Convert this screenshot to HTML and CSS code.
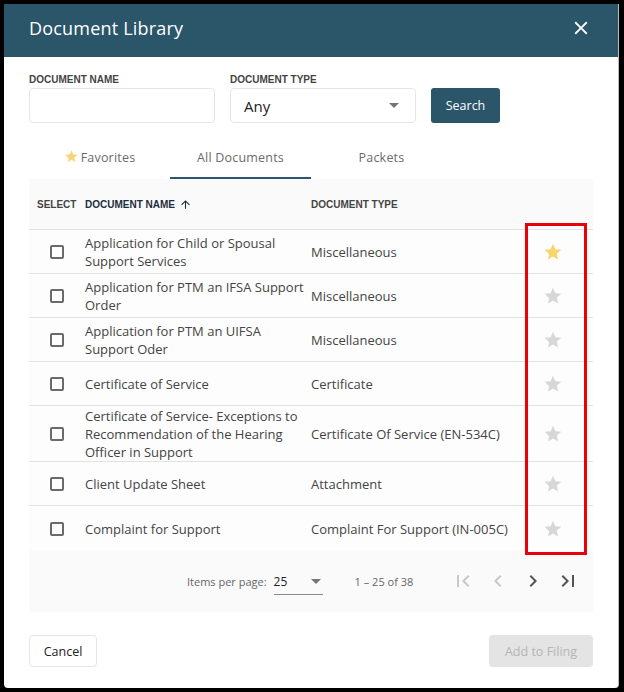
FILE: index.html
```html
<!DOCTYPE html>
<html>
<head>
<meta charset="utf-8">
<link rel="stylesheet" href="styles.css">
</head>
<body>
<div class="modal">
  <div class="header">
    <span class="title">Document Library</span>
    <svg class="close" viewBox="0 0 24 24" width="22" height="22"><path fill="#fff" d="M19 6.41L17.59 5 12 10.59 6.41 5 5 6.41 10.59 12 5 17.59 6.41 19 12 13.41 17.59 19 19 17.59 13.41 12z"/></svg>
  </div>
  <div class="content">
    <div class="filters">
      <div class="field">
        <label class="lbl">DOCUMENT NAME</label>
        <div class="input"></div>
      </div>
      <div class="field">
        <label class="lbl">DOCUMENT TYPE</label>
        <div class="input select"><span>Any</span><span class="caret"></span></div>
      </div>
      <button class="search">Search</button>
    </div>
    <div class="tabs">
      <div class="tab"><svg viewBox="0 0 24 24" width="15" height="15"><path fill="#f8d77a" d="M12 17.27L18.18 21l-1.64-7.19L22 9.24l-7.19-.61L12 2 9.19 8.63 2 9.24l5.46 5.57L5.82 21z"/></svg>Favorites</div>
      <div class="tab active">All Documents</div>
      <div class="tab">Packets</div>
    </div>
    <div class="table">
      <div class="thead">
        <div class="c-sel">SELECT</div>
        <div class="c-name dark">DOCUMENT NAME <svg viewBox="0 0 24 24" width="13" height="13"><path fill="#1d2d3e" d="M4 12l1.41 1.41L11 7.83V20h2V7.83l5.58 5.59L20 12l-8-8-8 8z"/></svg></div>
        <div class="c-type">DOCUMENT TYPE</div>
      </div>
      <div class="row"><div class="c-sel"><span class="cb"></span></div><div class="c-name">Application for Child or Spousal Support Services</div><div class="c-type">Miscellaneous</div><div class="c-star"><svg viewBox="0 0 24 24" width="20" height="20"><path fill="#f9d46c" d="M12 17.27L18.18 21l-1.64-7.19L22 9.24l-7.19-.61L12 2 9.19 8.63 2 9.24l5.46 5.57L5.82 21z"/></svg></div></div>
      <div class="row"><div class="c-sel"><span class="cb"></span></div><div class="c-name">Application for PTM an IFSA Support Order</div><div class="c-type">Miscellaneous</div><div class="c-star"><svg viewBox="0 0 24 24" width="20" height="20"><path fill="#d7d7d7" d="M12 17.27L18.18 21l-1.64-7.19L22 9.24l-7.19-.61L12 2 9.19 8.63 2 9.24l5.46 5.57L5.82 21z"/></svg></div></div>
      <div class="row"><div class="c-sel"><span class="cb"></span></div><div class="c-name">Application for PTM an UIFSA Support Oder</div><div class="c-type">Miscellaneous</div><div class="c-star"><svg viewBox="0 0 24 24" width="20" height="20"><path fill="#d7d7d7" d="M12 17.27L18.18 21l-1.64-7.19L22 9.24l-7.19-.61L12 2 9.19 8.63 2 9.24l5.46 5.57L5.82 21z"/></svg></div></div>
      <div class="row"><div class="c-sel"><span class="cb"></span></div><div class="c-name">Certificate of Service</div><div class="c-type">Certificate</div><div class="c-star"><svg viewBox="0 0 24 24" width="20" height="20"><path fill="#d7d7d7" d="M12 17.27L18.18 21l-1.64-7.19L22 9.24l-7.19-.61L12 2 9.19 8.63 2 9.24l5.46 5.57L5.82 21z"/></svg></div></div>
      <div class="row"><div class="c-sel"><span class="cb"></span></div><div class="c-name">Certificate of Service- Exceptions to Recommendation of the Hearing Officer in Support</div><div class="c-type">Certificate Of Service (EN-534C)</div><div class="c-star"><svg viewBox="0 0 24 24" width="20" height="20"><path fill="#d7d7d7" d="M12 17.27L18.18 21l-1.64-7.19L22 9.24l-7.19-.61L12 2 9.19 8.63 2 9.24l5.46 5.57L5.82 21z"/></svg></div></div>
      <div class="row"><div class="c-sel"><span class="cb"></span></div><div class="c-name">Client Update Sheet</div><div class="c-type">Attachment</div><div class="c-star"><svg viewBox="0 0 24 24" width="20" height="20"><path fill="#d7d7d7" d="M12 17.27L18.18 21l-1.64-7.19L22 9.24l-7.19-.61L12 2 9.19 8.63 2 9.24l5.46 5.57L5.82 21z"/></svg></div></div>
      <div class="row last"><div class="c-sel"><span class="cb"></span></div><div class="c-name">Complaint for Support</div><div class="c-type">Complaint For Support (IN-005C)</div><div class="c-star"><svg viewBox="0 0 24 24" width="20" height="20"><path fill="#d7d7d7" d="M12 17.27L18.18 21l-1.64-7.19L22 9.24l-7.19-.61L12 2 9.19 8.63 2 9.24l5.46 5.57L5.82 21z"/></svg></div></div>
      <div class="pager">
        <span class="ipp">Items per page:</span>
        <div class="pp"><span>25</span><span class="caret"></span></div>
        <span class="range">1 – 25 of 38</span>
        <div class="navs">
          <svg viewBox="0 0 24 24" width="24" height="24"><path fill="#c8c8c8" d="M18.41 16.59L13.82 12l4.59-4.59L17 6l-6 6 6 6zM6 6h2v12H6z"/></svg>
          <svg viewBox="0 0 24 24" width="24" height="24"><path fill="#c8c8c8" d="M15.41 7.41L14 6l-6 6 6 6 1.41-1.41L10.83 12z"/></svg>
          <svg viewBox="0 0 24 24" width="24" height="24"><path fill="#555" d="M10 6L8.59 7.41 13.17 12l-4.58 4.59L10 18l6-6z"/></svg>
          <svg viewBox="0 0 24 24" width="24" height="24"><path fill="#555" d="M5.590 7.41L10.18 12l-4.59 4.59L7 18l6-6-6-6zM16 6h2v12h-2z"/></svg>
        </div>
      </div>
      <div class="highlight"></div>
    </div>
    <div class="footer">
      <button class="cancel">Cancel</button>
      <button class="add">Add to Filing</button>
    </div>
  </div>
</div>
</body>
</html>
```
FILE: styles.css
```css
html, body { margin: 0; padding: 0; }
body {
  background: #000;
  width: 624px;
  height: 692px;
  padding: 4px 0 0 4px;
  box-sizing: border-box;
  font-family: "Open Sans", "Liberation Sans", sans-serif;
}
.modal {
  width: 615px;
  height: 684px;
  background: #fff;
  border-radius: 0 0 4px 4px;
  overflow: hidden;
  border-right: 1px solid #bbb;
  box-sizing: border-box;
}
.header {
  height: 53px;
  background: #2b5569;
  display: flex;
  align-items: center;
  justify-content: space-between;
  padding: 0 26px 5px 25px;
  box-sizing: border-box;
}
.title {
  color: #fff;
  font-size: 18px;
  font-family: "Open Sans", sans-serif;
  letter-spacing: 0.2px;
}
.content { padding: 0 25px 0 25px; }
.filters {
  display: flex;
  align-items: flex-end;
  gap: 15px;
  padding-top: 17px;
}
.field { display: flex; flex-direction: column; width: 186px; }
.lbl {
  font-family: "Liberation Sans", Arial, sans-serif;
  font-weight: bold;
  font-size: 10px;
  color: #444;
  line-height: 12px;
  margin-bottom: 2px;
}
.input {
  height: 35px;
  border: 1px solid #e6e6e6;
  border-radius: 4px;
  box-sizing: border-box;
}
.select {
  display: flex;
  align-items: center;
  justify-content: space-between;
  padding: 0 16px 0 13px;
  font-size: 15px;
  color: #222;
}
.caret {
  width: 0; height: 0;
  border-left: 5px solid transparent;
  border-right: 5px solid transparent;
  border-top: 5px solid #757575;
}
.search {
  height: 35px;
  width: 69px;
  background: #2b5569;
  color: #fff;
  border: none;
  border-radius: 3px;
  font-family: "Open Sans", sans-serif;
  font-size: 12.5px;
  padding: 0;
}
.tabs {
  display: flex;
  margin-top: 17px;
  height: 39px;
}
.tab {
  width: 141px;
  display: flex;
  align-items: center;
  justify-content: center;
  font-size: 12.5px;
  color: #6b6b6b;
  box-sizing: border-box;
  padding-bottom: 5px;
  letter-spacing: 0.2px;
}
.tab svg { margin-right: 2px; margin-top: -2px; }
.tab.active { border-bottom: 2px solid #2b5569; padding-bottom: 3px; }
.table {
  background: #fafafa;
  position: relative;
}
.thead, .row {
  display: flex;
  align-items: center;
  border-bottom: 1px solid #e2e2e2;
}
.thead {
  height: 51px;
  box-sizing: border-box;
  font-family: "Liberation Sans", Arial, sans-serif;
  font-weight: bold;
  font-size: 10px;
  color: #444;
}
.thead .c-sel { padding-left: 8px; width: 56px; }
.thead .dark { color: #1d2d3e; display: flex; align-items: center; gap: 4px; }
.c-sel { width: 56px; flex: none; box-sizing: border-box; display: flex; align-items: center; }
.c-name { width: 226px; flex: none; box-sizing: border-box; }
.c-type { width: 214px; flex: none; }
.c-star { width: 56px; flex: none; display: flex; justify-content: center; }
.row {
  min-height: 44px;
  font-size: 13px;
  color: #444;
  line-height: 18px;
  padding: 1px 0 0 0;
  box-sizing: border-box;
  background: #fdfdfd;
}
.row .c-sel { justify-content: center; padding-left: 0; }
.cb {
  width: 10px; height: 10px;
  border: 2px solid #6a6a6a;
  border-radius: 2px;
  display: block;
}
.row.last { border-bottom: none; }
.pager {
  height: 62px;
  display: flex;
  align-items: center;
  padding-left: 158px;
  font-size: 11px;
  color: #666;
}
.ipp { margin-right: 7px; }
.pp {
  width: 49px;
  height: 26px;
  border-bottom: 1px solid #8a8a8a;
  display: flex;
  align-items: center;
  justify-content: space-between;
  box-sizing: border-box;
  padding: 0 2px 0 0;
  color: #222;
  font-size: 12px;
  margin-top: 2px;
}
.range { margin-left: 32px; }
.navs { display: flex; gap: 11px; margin-left: 38px; }
.highlight {
  position: absolute;
  left: 496px;
  top: 44px;
  width: 56px;
  height: 326px;
  border: 3px solid #e8000b;
}
.footer {
  display: flex;
  justify-content: space-between;
  margin-top: 23px;
}
.cancel, .add {
  height: 32px;
  border-radius: 4px;
  font-family: "Open Sans", sans-serif;
  font-size: 12.5px;
  padding: 0;
}
.cancel {
  width: 68px;
  background: #fff;
  border: 1px solid #e6e6e6;
  color: #222;
}
.add {
  width: 104px;
  background: #e4e4e4;
  border: none;
  color: #b5b5b5;
}
```
